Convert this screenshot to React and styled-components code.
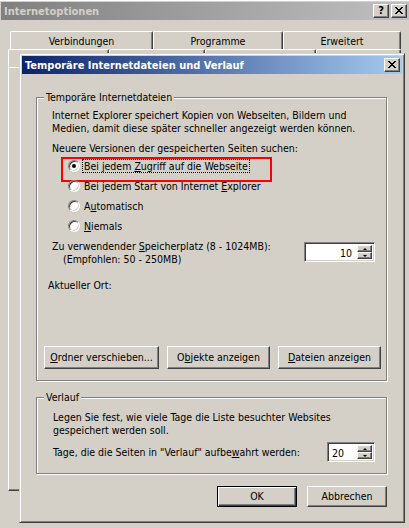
import React from 'react'
import styled, { createGlobalStyle, css } from 'styled-components'

const GlobalStyle = createGlobalStyle`
  html, body {
    margin: 0;
    padding: 0;
    background: #d4d0c8;
  }
  body {
    font-family: "DejaVu Sans Condensed", "DejaVu Sans", sans-serif;
    font-stretch: condensed;
    font-size: 10.5px;
    line-height: 13px;
    color: #000;
  }
  * { box-sizing: border-box; }
`

const raised = css`
  border: 1px solid;
  border-color: #fff #404040 #404040 #fff;
  box-shadow: inset -1px -1px 0 #808080, inset 1px 1px 0 #d4d0c8;
`

const sunken = css`
  border: 1px solid;
  border-color: #808080 #fff #fff #808080;
  box-shadow: inset 1px 1px 0 #404040, inset -1px -1px 0 #d4d0c8;
`

const windowFrame = css`
  border: 1px solid;
  border-color: #d4d0c8 #404040 #404040 #d4d0c8;
  box-shadow: inset 1px 1px 0 #fff, inset -1px -1px 0 #808080;
  padding: 2px;
  background: #d4d0c8;
`

function CloseGlyph() {
  return (
    <svg width="8" height="7" viewBox="0 0 8 7" shapeRendering="crispEdges">
      <path
        fill="#000"
        d="M0 0h2v1H0zM6 0h2v1H6zM1 1h2v1H1zM5 1h2v1H5zM2 2h4v1H2zM3 3h2v1H3zM2 4h4v1H2zM1 5h2v1H1zM5 5h2v1H5zM0 6h2v1H0zM6 6h2v1H6z"
      />
    </svg>
  )
}

function Radio({ checked, marked, focused, children }) {
  return (
    <RadioRow $marked={marked}>
      <RadioDot $checked={checked} />
      <RadioLabel $focused={focused}>{children}</RadioLabel>
    </RadioRow>
  )
}

function Spin({ value, width, align }) {
  return (
    <SpinBox $w={width}>
      <SpinValue $align={align}>{value}</SpinValue>
      <SpinButtons>
        <SpinButton><Arrow $up /></SpinButton>
        <SpinButton><Arrow /></SpinButton>
      </SpinButtons>
    </SpinBox>
  )
}

export default function App() {
  return (
    <Screen>
      <GlobalStyle />
      <BackWindow>
        <TitleBar $inactive>
          <TitleText>Internetoptionen</TitleText>
          <TitleButtons>
            <TitleButton><HelpMark>?</HelpMark></TitleButton>
            <TitleButton><CloseGlyph /></TitleButton>
          </TitleButtons>
        </TitleBar>
        <TabControl>
          <TabRow $offset={2}>
            <Tab $w={143}>Verbindungen</Tab>
            <Tab $w={130}>Programme</Tab>
            <Tab $w={118}>Erweitert</Tab>
          </TabRow>
          {/* front row of tabs, its labels lie under the dialog */}
          <TabRow $offset={0}>
            <Tab $w={101} />
            <Tab $w={96} />
            <Tab $w={111} />
            <Tab $w={85} />
          </TabRow>
          <TabPanel />
        </TabControl>
      </BackWindow>

      <Dialog>
        <TitleBar>
          <TitleText>Temporäre Internetdateien und Verlauf</TitleText>
          <TitleButtons>
            <TitleButton><CloseGlyph /></TitleButton>
          </TitleButtons>
        </TitleBar>
        <Client>
          <GroupBox $h={284} $pad="11px 11px 11px 15px">
            <Legend>Temporäre Internetdateien</Legend>
            <Line>Internet Explorer speichert Kopien von Webseiten, Bildern und</Line>
            <Line>Medien, damit diese später schneller angezeigt werden können.</Line>
            <Line $mt={7}>Neuere Versionen der gespeicherten Seiten suchen:</Line>
            <RadioList>
              <Radio checked marked focused>Bei jedem <U>Z</U>ugriff auf die Webseite</Radio>
              <Radio>Bei jedem Start von Internet <U>E</U>xplorer</Radio>
              <Radio>A<U>u</U>tomatisch</Radio>
              <Radio><U>N</U>iemals</Radio>
            </RadioList>
            <FieldRow $mt={4}>
              <div>
                <Line>Zu verwendender <U>S</U>peicherplatz (8 - 1024MB):</Line>
                <Line $indent={11}>(Empfohlen: 50 - 250MB)</Line>
              </div>
              <SpinSlot $mt={2}>
                <Spin value="10" width={71} align="right" />
              </SpinSlot>
            </FieldRow>
            <Line $mt={13} $indent={-4}>Aktueller Ort:</Line>
            <ButtonRow>
              <Button $w={115}><U>O</U>rdner verschieben...</Button>
              <Button $w={103}>O<U>b</U>jekte anzeigen</Button>
              <Button $w={103}><U>D</U>ateien anzeigen</Button>
            </ButtonRow>
          </GroupBox>

          <GroupBox $h={77} $mt={16} $pad="13px 11px 11px 16px">
            <Legend>Verlauf</Legend>
            <Line>Legen Sie fest, wie viele Tage die Liste besuchter Websites</Line>
            <Line>gespeichert werden soll.</Line>
            <FieldRow $mt={5} $center>
              <Line>Tage, die die Seiten in "Verlauf" aufbe<U>w</U>ahrt werden:</Line>
              <Spin value="20" width={48} align="left" />
            </FieldRow>
          </GroupBox>

          <Footer>
            <Button $w={80} $h={21} $default>OK</Button>
            <Button $w={80} $h={21}>Abbrechen</Button>
          </Footer>
        </Client>
      </Dialog>
    </Screen>
  )
}

const Screen = styled.div`
  position: relative;
  width: 409px;
  height: 528px;
  overflow: hidden;
  background: #d4d0c8;
`

const BackWindow = styled.div`
  ${windowFrame}
  width: 414px;
  height: 540px;
  margin: -1px 0 0 -2px;
`

const TitleBar = styled.div`
  height: 18px;
  display: flex;
  align-items: center;
  justify-content: space-between;
  padding: 0 2px 0 3px;
  font-weight: bold;
  font-size: 11px;
  color: ${p => (p.$inactive ? '#d4d0c8' : '#fff')};
  background: ${p =>
    p.$inactive
      ? 'linear-gradient(to right, #808080, #c0c0c0)'
      : 'linear-gradient(to right, #0a246a, #a6caf0)'};
`

const TitleText = styled.span`
  white-space: nowrap;
  padding-top: 1px;
`

const TitleButtons = styled.div`
  display: flex;
  gap: 2px;
`

const TitleButton = styled.div`
  ${raised}
  width: 16px;
  height: 14px;
  background: #d4d0c8;
  display: flex;
  align-items: center;
  justify-content: center;
  padding-bottom: 1px;
`

const HelpMark = styled.span`
  color: #000;
  font-family: "DejaVu Sans", sans-serif;
  font-weight: bold;
  font-size: 11px;
  line-height: 11px;
`

const TabControl = styled.div`
  margin-top: 11px;
  padding-left: 7px;
`

const TabRow = styled.div`
  display: flex;
  padding-left: ${p => p.$offset}px;
`

const Tab = styled.div`
  width: ${p => p.$w}px;
  height: 18px;
  border: 1px solid;
  border-bottom: none;
  border-color: #fff #404040 #fff #fff;
  border-radius: 2px 2px 0 0;
  box-shadow: inset -1px 0 0 #808080;
  display: flex;
  align-items: center;
  justify-content: center;
  padding-top: 2px;
  white-space: nowrap;
`

const TabPanel = styled.div`
  width: 393px;
  height: 424px;
  border: 1px solid;
  border-color: #fff #404040 #404040 #fff;
  box-shadow: inset -1px -1px 0 #808080;
`

const Dialog = styled.div`
  ${windowFrame}
  position: absolute;
  left: 19px;
  top: 53px;
  width: 386px;
  height: 470px;
`

const Client = styled.div`
  display: flex;
  flex-direction: column;
  padding: 23px 15px 0 14px;
`

const GroupBox = styled.div`
  position: relative;
  display: flex;
  flex-direction: column;
  height: ${p => p.$h}px;
  margin-top: ${p => p.$mt || 0}px;
  padding: ${p => p.$pad};
  border: 1px solid #808080;
  box-shadow: inset 1px 1px 0 #fff, 1px 1px 0 #fff;
`

const Legend = styled.span`
  position: absolute;
  top: -7px;
  left: 7px;
  padding: 0 2px;
  background: #d4d0c8;
  white-space: nowrap;
`

const Line = styled.div`
  white-space: nowrap;
  margin-top: ${p => p.$mt || 0}px;
  margin-left: ${p => p.$indent || 0}px;
`

const U = styled.span`
  text-decoration: underline;
`

const RadioList = styled.div`
  display: flex;
  flex-direction: column;
  margin-top: 1px;
`

const RadioRow = styled.div`
  position: relative;
  display: flex;
  align-items: center;
  height: 20px;
  padding-left: 16px;

  ${p =>
    p.$marked &&
    css`
      &::before {
        content: '';
        position: absolute;
        left: 9px;
        top: 1px;
        width: 207px;
        height: 21px;
        border: 2px solid #f00;
      }
    `}
`

const RadioDot = styled.span`
  width: 12px;
  height: 12px;
  border-radius: 50%;
  background: #fff;
  border: 1px solid;
  border-color: #808080 #fff #fff #808080;
  box-shadow: inset 1px 1px 0 #404040, inset -1px -1px 0 #d4d0c8;
  display: flex;
  align-items: center;
  justify-content: center;

  &::after {
    content: '';
    display: ${p => (p.$checked ? 'block' : 'none')};
    width: 4px;
    height: 4px;
    border-radius: 50%;
    background: #000;
  }
`

const RadioLabel = styled.span`
  margin-left: 3px;
  padding: 0 1px;
  line-height: 12px;
  white-space: nowrap;
  outline: ${p => (p.$focused ? '1px dotted #000' : 'none')};
`

const FieldRow = styled.div`
  display: flex;
  justify-content: space-between;
  align-items: ${p => (p.$center ? 'center' : 'flex-start')};
  margin-top: ${p => p.$mt || 0}px;
`

const SpinSlot = styled.div`
  margin-top: ${p => p.$mt || 0}px;
`

const SpinBox = styled.div`
  ${sunken}
  display: flex;
  width: ${p => p.$w}px;
  height: 20px;
  padding: 2px;
  background: #fff;
`

const SpinValue = styled.span`
  flex: 1;
  text-align: ${p => p.$align};
  line-height: 16px;
  padding: 0 5px 0 2px;
`

const SpinButtons = styled.div`
  display: flex;
  flex-direction: column;
  width: 15px;
`

const SpinButton = styled.div`
  ${raised}
  flex: 1;
  background: #d4d0c8;
  display: flex;
  align-items: center;
  justify-content: center;
`

const Arrow = styled.span`
  width: 0;
  height: 0;
  border-left: 2px solid transparent;
  border-right: 2px solid transparent;
  ${p =>
    p.$up
      ? css`border-bottom: 2px solid #000;`
      : css`border-top: 2px solid #000;`}
`

const ButtonRow = styled.div`
  display: flex;
  justify-content: space-between;
  margin: auto -6px 0 -8px;
`

const Button = styled.button`
  ${raised}
  font: inherit;
  color: #000;
  width: ${p => p.$w}px;
  height: ${p => p.$h || 23}px;
  padding: 0;
  background: #d4d0c8;
  white-space: nowrap;

  ${p =>
    p.$default &&
    css`
      border: 1px solid #000;
      box-shadow: inset 1px 1px 0 #fff, inset -1px -1px 0 #404040,
        inset -2px -2px 0 #808080;
    `}
`

const Footer = styled.div`
  display: flex;
  justify-content: flex-end;
  gap: 10px;
  margin-top: 12px;
`
